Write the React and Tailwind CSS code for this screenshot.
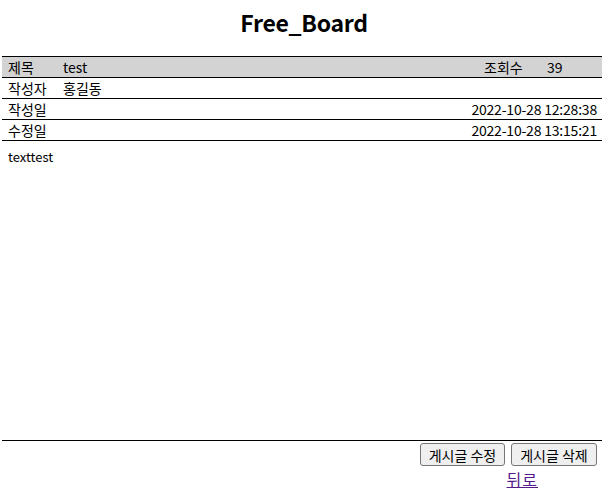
export default function App() {
  const font = { fontFamily: '"Noto Sans CJK KR", "Noto Sans", sans-serif' };
  return (
    <div className="w-[608px] h-[495px] bg-white text-black" style={font}>
      <div className="h-[56px] flex justify-center pt-[6px]">
        <h1 className="text-[23px] font-bold leading-[32px] tracking-[-0.3px]">Free_Board</h1>
      </div>
      <div className="ml-[2px] w-[600px] text-[14px] leading-[20px]">
        <div className="border-t-[1.5px] border-b-[1.5px] border-black bg-[#d3d3d3] flex h-[22px] items-center">
          <div className="w-[61px] pl-[6px]">제목</div>
          <div className="flex-1">test</div>
          <div className="w-[63px]">조회수</div>
          <div className="w-[55px]">39</div>
        </div>
        <div className="border-b-[1.5px] border-black flex h-[21px] items-center">
          <div className="w-[61px] pl-[6px]">작성자</div>
          <div className="flex-1">홍길동</div>
        </div>
        <div className="border-b-[1.5px] border-black flex h-[21px] items-center">
          <div className="w-[61px] pl-[6px]">작성일</div>
          <div className="flex-1 text-right pr-[5px] tracking-[-0.2px]">2022-10-28 12:28:38</div>
        </div>
        <div className="border-b-[1.5px] border-black flex h-[21px] items-center">
          <div className="w-[61px] pl-[6px]">수정일</div>
          <div className="flex-1 text-right pr-[5px] tracking-[-0.2px]">2022-10-28 13:15:21</div>
        </div>
        <div className="h-[300px] border-b-[1.5px] border-black pl-[6px] pt-[6px] text-[13px] leading-[20px]">
          texttest
        </div>
        <div className="flex justify-end gap-[6px] pr-[5px] pt-[2px]">
          <button className="h-[23px] w-[85px] text-[14px] leading-[20px] bg-[#efefef] border border-[#767676] rounded-[3px]">게시글 수정</button>
          <button className="h-[23px] w-[86px] text-[14px] leading-[20px] bg-[#efefef] border border-[#767676] rounded-[3px]">게시글 삭제</button>
        </div>
        <div className="flex justify-end pr-[64px] pt-[3px]">
          <a href="#" className="text-[16px] leading-[20px] text-[#551a8b] underline tracking-[1px]">뒤로</a>
        </div>
      </div>
    </div>
  );
}
